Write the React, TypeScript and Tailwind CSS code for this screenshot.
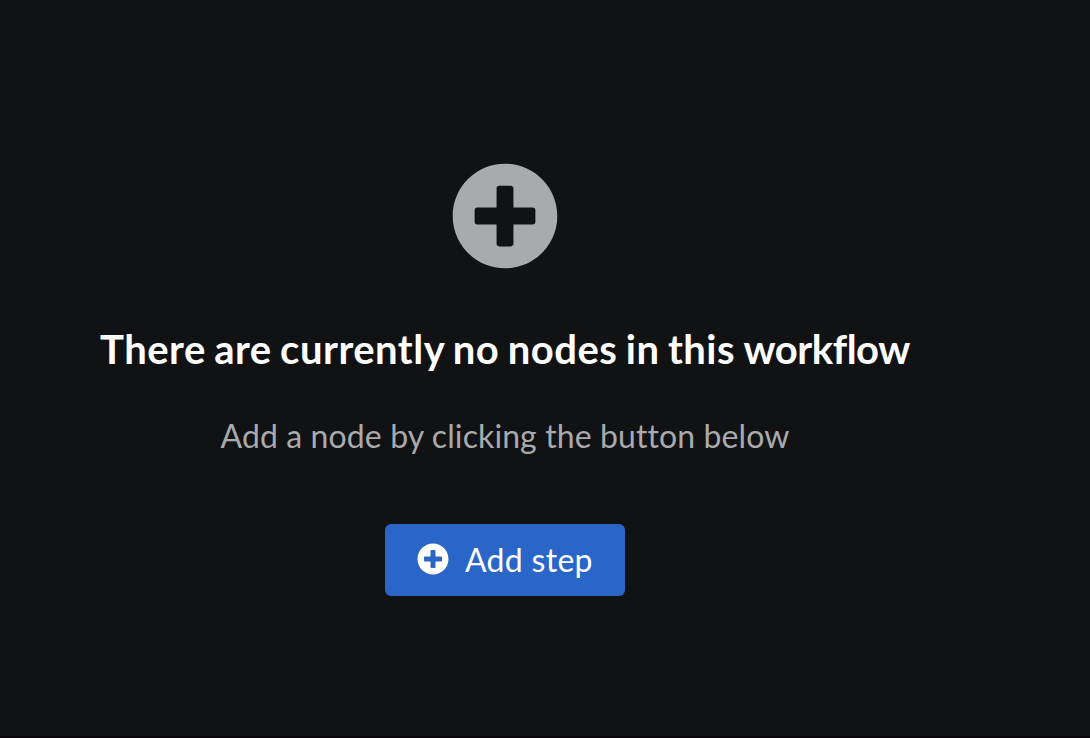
import { FaPlusCircle } from "react-icons/fa";

export default function App() {
  return (
    <main className="flex h-[738px] w-full flex-col items-center border-b-2 border-[#08060b] bg-[#111214] pr-20 pt-[162px] font-['Lato','Noto_Sans',sans-serif]">
      <FaPlusCircle className="size-[108px] text-[#a9aaac]" />
      <h1 className="mt-[55px] whitespace-nowrap text-[40px] font-bold leading-[48px] tracking-[0.5px] text-white [font-variant-ligatures:none] [word-spacing:-1.8px]">
        There are currently no nodes in this <span className="tracking-[-0.45px]">workflow</span>
      </h1>
      <p className="mt-[39px] whitespace-nowrap text-[32px] leading-[48px] tracking-[0.1px] text-[#a9aaac] [font-variant-ligatures:none]">Add a node by clicking the button below</p>
      <button className="mt-[64px] flex h-[72px] w-[240px] items-center gap-4 rounded-[6px] bg-[#2a66c8] pl-8 text-[32px] text-white">
        <FaPlusCircle className="mb-0.5 size-8" />
        <span className="whitespace-nowrap tracking-[0.3px]">Add step</span>
      </button>
    </main>
  );
}
